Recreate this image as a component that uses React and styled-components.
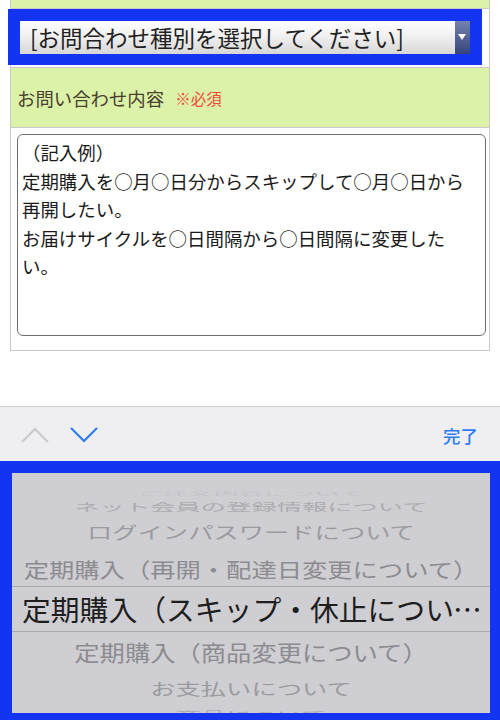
import React from "react";
import styled, { createGlobalStyle } from "styled-components";

const GlobalStyle = createGlobalStyle`
    html, body {
        margin: 0;
        padding: 0;
        background: #fff;
    }
    body {
        font-family: "Noto Sans CJK JP", "Noto Sans", sans-serif;
    }
`

const pickerItems = [
    { text: "ご注文内容について", h: 12, scale: 0.18, color: "#c2c2c6" },
    { text: "ネット会員の登録情報について", h: 14, scale: 0.42, color: "#acacb0" },
    { text: "ログインパスワードについて", h: 39, scale: 0.66, color: "#9b9b9f" },
    { text: "定期購入（再開・配達日変更について）", h: 34, scale: 0.82, color: "#8c8c90" },
    { text: "定期購入（スキップ・休止について）", h: 46, selected: true },
    { text: "定期購入（商品変更について）", h: 40, scale: 0.86, color: "#8c8c90" },
    { text: "お支払いについて", h: 32, scale: 0.62, color: "#9b9b9f" },
    { text: "商品について", h: 20, scale: 0.4, color: "#acacb0" },
]

const App = () => {
    return (
        <Page>
            <GlobalStyle />
            <Form>
                <GreenTop />
                <SelectRow>
                    <Highlight>
                        <Select>
                            <SelectText>[お問合わせ種別を選択してください]</SelectText>
                            <SelectButton />
                        </Select>
                    </Highlight>
                </SelectRow>
                <LabelRow>
                    お問い合わせ内容
                    <Required>※必須</Required>
                </LabelRow>
                <TextRow>
                    <TextBox>
                        {"（記入例）\n定期購入を○月○日分からスキップして○月○日から\n再開したい。\nお届けサイクルを○日間隔から○日間隔に変更した\nい。"}
                    </TextBox>
                </TextRow>
            </Form>
            <Space />
            <Toolbar>
                <Arrows>
                    <svg width="28" height="16" viewBox="0 0 28 16">
                        <polyline points="1,15 14,2 27,15" fill="none" stroke="#c9c9cd" strokeWidth="2" />
                    </svg>
                    <svg width="28" height="16" viewBox="0 0 28 16">
                        <polyline points="1,1 14,14 27,1" fill="none" stroke="#2f7cf6" strokeWidth="2.2" />
                    </svg>
                </Arrows>
                <Done>完了</Done>
            </Toolbar>
            <PickerFrame>
                <Picker>
                    {pickerItems.map((item) => (
                        <PickerRow key={item.text} $h={item.h} $selected={item.selected}>
                            <PickerText
                                $selected={item.selected}
                                $scale={item.scale}
                                $color={item.color}
                            >
                                {item.text}
                            </PickerText>
                        </PickerRow>
                    ))}
                </Picker>
            </PickerFrame>
        </Page>
    )
}

const Page = styled.div`
    width: 500px;
    height: 720px;
    overflow: hidden;
    display: flex;
    flex-direction: column;
    background: #fff;
`

const Form = styled.div`
    margin: 0 10px;
    border-left: 1px solid #c9c9c9;
    border-right: 1px solid #c9c9c9;
    border-bottom: 1px solid #c9c9c9;
`

const GreenTop = styled.div`
    height: 8px;
    background: #dbf2a8;
    border-bottom: 1px solid #c9c9c9;
`

const SelectRow = styled.div`
    display: flex;
    height: 58px;
    padding-right: 7px;
    background: #fff;
`

const Highlight = styled.div`
    margin-left: -3px;
    flex: 1;
    height: 56px;
    box-sizing: border-box;
    padding: 12px 12px 11px 12px;
    background: #1434f4;
`

const Select = styled.div`
    display: flex;
    height: 33px;
    background: linear-gradient(#ffffff, #f1f1f1 45%, #d6d6d6);
`

const SelectText = styled.div`
    flex: 1;
    padding-left: 10px;
    font-size: 22.5px;
    line-height: 33px;
    color: #222;
    white-space: nowrap;
    overflow: hidden;
`

const SelectButton = styled.div`
    position: relative;
    width: 15px;
    background: linear-gradient(#7683b0, #34437c);

    &::after {
        content: "";
        position: absolute;
        left: 3px;
        top: 13px;
        border-left: 4.5px solid transparent;
        border-right: 4.5px solid transparent;
        border-top: 6px solid #fff;
    }
`

const LabelRow = styled.div`
    display: flex;
    align-items: center;
    height: 61px;
    padding-left: 6px;
    padding-top: 1px;
    box-sizing: border-box;
    background: #dbf2a8;
    border-top: 1px solid #c9c9c9;
    border-bottom: 1px solid #c9c9c9;
    font-size: 18.4px;
    color: #4a4030;
`

const Required = styled.span`
    margin-left: 11px;
    font-size: 15.5px;
    color: #f04a3a;
`

const TextRow = styled.div`
    height: 222px;
    box-sizing: border-box;
    padding: 6px 3px 0 6px;
    background: #fff;
`

const TextBox = styled.div`
    height: 202px;
    box-sizing: border-box;
    padding: 3px 4px;
    border: 1.5px solid #6f6f6f;
    border-radius: 6px;
    font-size: 18.45px;
    line-height: 28.6px;
    color: #1a1a1a;
    white-space: pre-line;
    overflow: hidden;
`

const Space = styled.div`
    height: 55px;
    flex-shrink: 0;
`

const Toolbar = styled.div`
    display: flex;
    align-items: center;
    justify-content: space-between;
    height: 54px;
    flex-shrink: 0;
    padding: 0 22px 0 21px;
    background: #efeff2;
    border-top: 1px solid #cfcfd2;
`

const Arrows = styled.div`
    display: flex;
    gap: 21px;
    padding-top: 2px;
`

const Done = styled.div`
    font-size: 17.5px;
    font-weight: 500;
    color: #2f7cf6;
    padding-top: 2px;
`

const PickerFrame = styled.div`
    flex: 1;
    min-height: 0;
    padding: 12px 10px 7px 12px;
    background: #1434f4;
    display: flex;
`

const Picker = styled.div`
    flex: 1;
    overflow: hidden;
    padding-top: 14px;
    background: #cfced3;
`

const PickerRow = styled.div`
    display: flex;
    align-items: center;
    justify-content: center;
    height: ${(p) => p.$h}px;
    flex-shrink: 0;
    box-sizing: border-box;
    overflow: ${(p) => (p.$selected ? "hidden" : "visible")};
    border-top: ${(p) => (p.$selected ? "1px solid #aaaaae" : "none")};
    border-bottom: ${(p) => (p.$selected ? "1px solid #aaaaae" : "none")};
    padding: ${(p) => (p.$selected ? "0 2px 0 10px" : "0")};
`

const PickerText = styled.div`
    white-space: nowrap;
    overflow: ${(p) => (p.$selected ? "hidden" : "visible")};
    text-overflow: ellipsis;
    max-width: 100%;
    font-size: ${(p) => (p.$selected ? "28.8px" : "25.3px")};
    line-height: 1.2;
    color: ${(p) => (p.$selected ? "#1e1e1e" : p.$color)};
    transform: ${(p) => (p.$selected ? "none" : `scaleY(${p.$scale})`)};
`

export default App;
